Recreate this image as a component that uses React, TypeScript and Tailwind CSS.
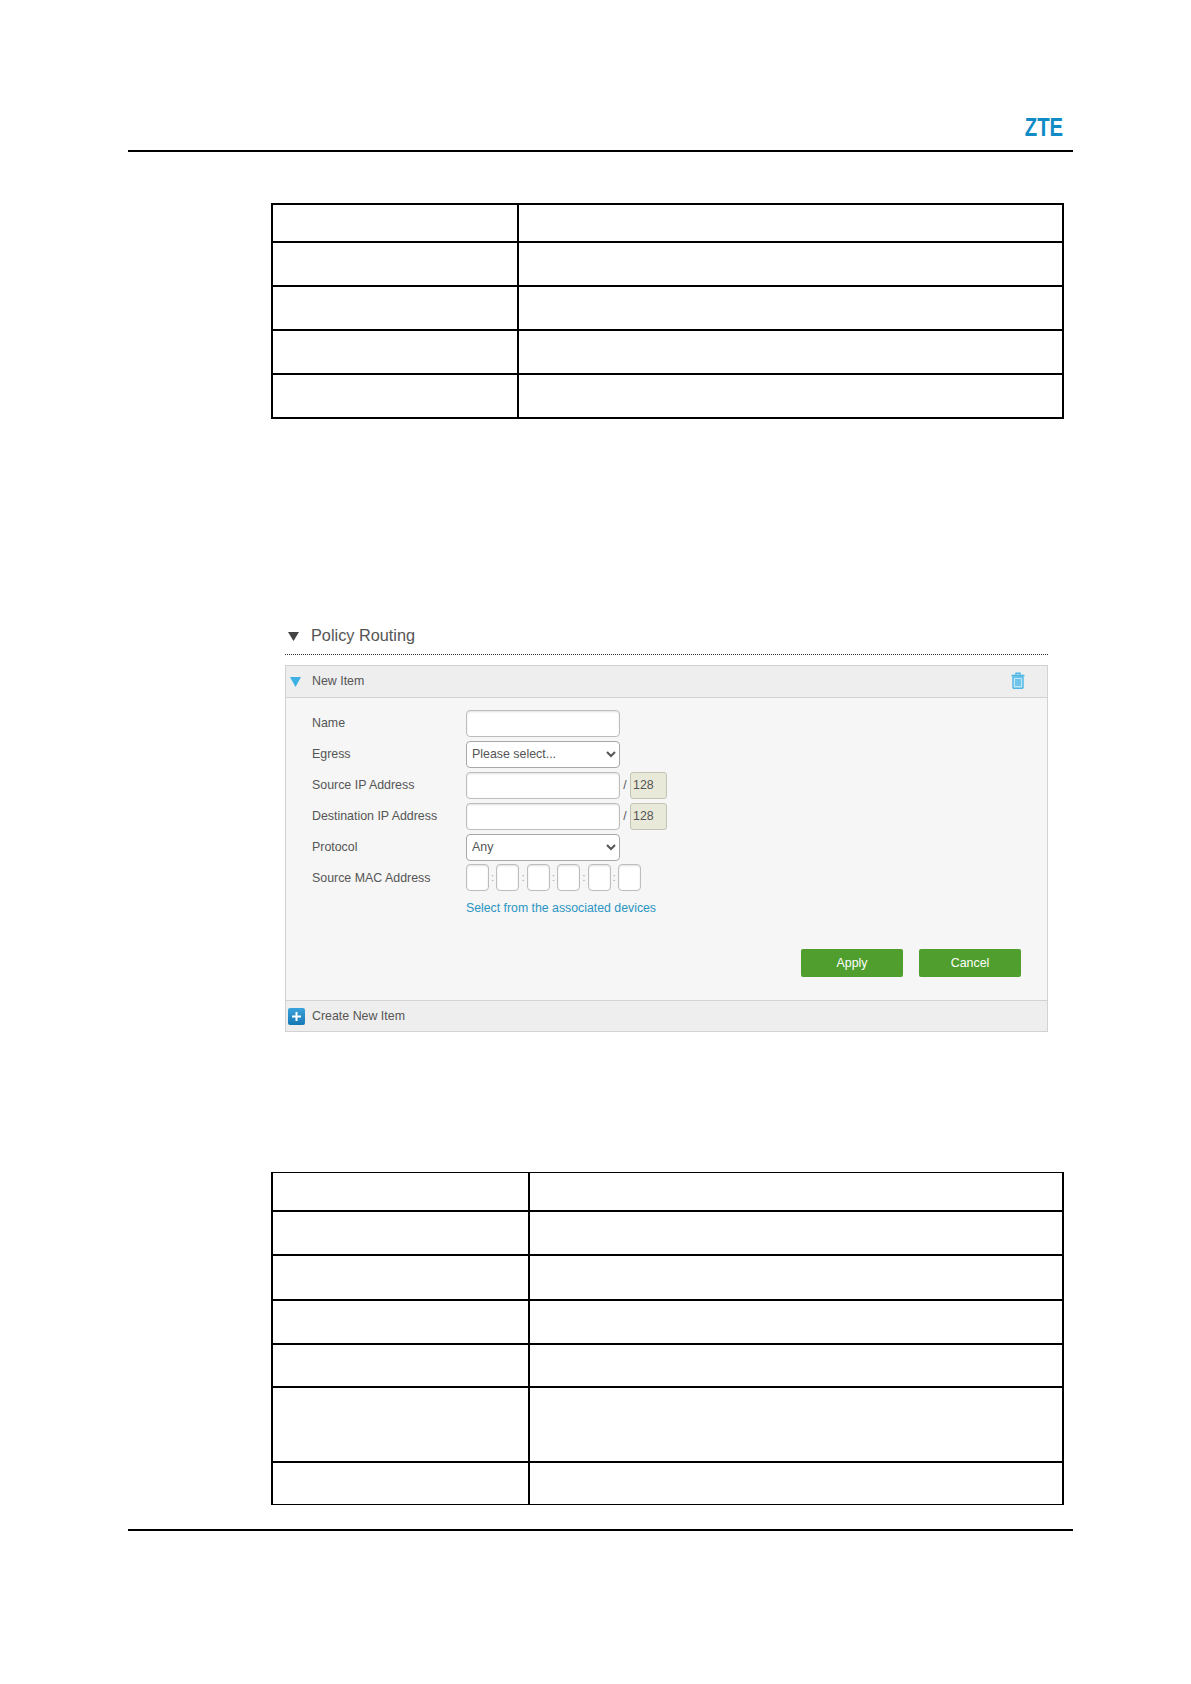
const FONT = "font-['Liberation_Sans',Arial,sans-serif]";

const TOP_ROWS = ['h-[38px]', 'h-[44px]', 'h-[44px]', 'h-[44px]', 'h-[44px]'];
const BOTTOM_ROWS = ['h-[38px]', 'h-[44px]', 'h-[45px]', 'h-[44px]', 'h-[43px]', 'h-[75px]', 'h-[43px]'];

function EmptyTable({ rows, firstCol, thinEdges }: { rows: string[]; firstCol: string; thinEdges?: boolean }) {
  return (
    <table className="w-[793px] table-fixed border-collapse">
      <colgroup>
        <col className={firstCol} />
        <col />
      </colgroup>
      <tbody>
        {rows.map((h, i) => {
          // the second table has hairline top and bottom edges in the scan
          let edge = 'border-2';
          if (thinEdges && i === 0) edge = 'border-x-2 border-b-2 border-t';
          if (thinEdges && i === rows.length - 1) edge = 'border-x-2 border-t-2 border-b';
          return (
            <tr key={i} className={h}>
              <td className={`${edge} border-black`}></td>
              <td className={`${edge} border-black`}></td>
            </tr>
          );
        })}
      </tbody>
    </table>
  );
}

function Rule() {
  return <div className="ml-[128px] h-[2px] w-[945px] bg-black"></div>;
}

function Label({ children }: { children: React.ReactNode }) {
  return <div className="w-[154px] text-[12.4px] text-[#555]">{children}</div>;
}

const inputCls = 'h-[27px] rounded-[4px] border border-[#bdbdbd] bg-white shadow-[inset_0_1px_2px_rgba(0,0,0,0.12)]';

function Prefix() {
  return (
    <div className="flex items-center">
      <div className={`${inputCls} w-[154px]`}></div>
      <span className="w-[10px] text-center text-[12px] text-[#555]">/</span>
      <div className="flex h-[27px] w-[37px] items-center rounded-[3px] border border-[#c4c4b4] bg-[#e9e9d9] pl-[2px] text-[12.4px] text-[#555]">
        128
      </div>
    </div>
  );
}

function Dropdown({ text }: { text: string }) {
  return (
    <select className={`h-[27px] w-[154px] rounded-[4px] border border-[#a8a8a8] bg-white pl-[1px] text-[12.4px] text-[#555] ${FONT}`}>
      <option>{text}</option>
    </select>
  );
}

function MacFields() {
  return (
    <div className="flex items-center">
      {[0, 1, 2, 3, 4, 5].map((i) => (
        <div key={i} className="flex items-center">
          {i > 0 && <span className="w-[7.4px] text-center text-[10px] text-[#999]">:</span>}
          <div className={`${inputCls} w-[23px]`}></div>
        </div>
      ))}
    </div>
  );
}

function Row({ label, children }: { label: string; children: React.ReactNode }) {
  return (
    <div className="flex h-[27px] items-center">
      <Label>{label}</Label>
      {children}
    </div>
  );
}

export default function App() {
  return (
    <div className={`h-[1684px] w-[1191px] bg-white ${FONT}`}>
      {/* page header */}
      <div className="flex h-[150px] items-end justify-end pr-[128px]">
        <span className="mb-[10px] origin-right scale-x-[0.78] text-[26px] leading-[26px] font-bold text-[#0f8cc6]">ZTE</span>
      </div>
      <Rule />

      <div className="ml-[271px] mt-[51px]">
        <EmptyTable rows={TOP_ROWS} firstCol="w-[246px]" />
      </div>

      {/* Policy Routing screenshot */}
      <div className="ml-[285px] mt-[200px] w-[763px]">
        <div className="flex h-[36px] items-center border-b border-dotted border-[#333] pb-[3px]">
          <svg width="11" height="9" viewBox="0 0 11 9" className="ml-[3px] mt-[3px]">
            <path d="M0 0h11L5.5 9z" fill="#444" />
          </svg>
          <span className="ml-[12px] text-[16.3px] text-[#555]">Policy Routing</span>
        </div>

        <div className="mt-[10px] border border-[#d2d2d2]">
          <div className="flex h-[32px] items-center border-b border-[#d2d2d2] bg-[#eeeeee]">
            <svg width="11" height="10" viewBox="0 0 11 10" className="ml-[4px]">
              <path d="M0 0h11L5.5 10z" fill="#3cb1e3" />
            </svg>
            <span className="ml-[11px] text-[12.4px] text-[#555]">New Item</span>
            <svg width="14" height="17" viewBox="0 0 14 17" className="ml-auto mb-[2px] mr-[22px]" fill="none" stroke="#4cb6e6" strokeWidth="1.4">
              <path d="M0.5 3.5h13M5 3V1.2h4V3" />
              <path d="M2 5h10v10.2a1 1 0 0 1-1 1H3a1 1 0 0 1-1-1z" fill="#bfe6f7" />
              <path d="M5 7v7M7 7v7M9 7v7" />
            </svg>
          </div>

          <div className="flex h-[302px] flex-col bg-[#f6f6f6] pl-[26px] pr-[26px] pt-[12px]">
            <div className="flex flex-col gap-[3.9px]">
              <Row label="Name">
                <div className={`${inputCls} w-[154px]`}></div>
              </Row>
              <Row label="Egress">
                <Dropdown text="Please select..." />
              </Row>
              <Row label="Source IP Address">
                <Prefix />
              </Row>
              <Row label="Destination IP Address">
                <Prefix />
              </Row>
              <Row label="Protocol">
                <Dropdown text="Any" />
              </Row>
              <Row label="Source MAC Address">
                <MacFields />
              </Row>
            </div>
            <div className="ml-[154px] mt-[9px] text-[12.3px] leading-[16px] text-[#2a95c4]">Select from the associated devices</div>
            <div className="mt-[33px] flex justify-end gap-[16px]">
              <button className="h-[28px] w-[102px] rounded-[2px] bg-[#4f9e2e] text-[12.4px] text-white">Apply</button>
              <button className="h-[28px] w-[102px] rounded-[2px] bg-[#4f9e2e] text-[12.4px] text-white">Cancel</button>
            </div>
          </div>

          <div className="flex h-[31px] items-center border-t border-[#d2d2d2] bg-[#eeeeee]">
            <div className="ml-[2px] flex h-[17px] w-[17px] items-center justify-center rounded-[2px] bg-linear-to-b from-[#3aa3dc] to-[#1378b4]">
              <svg width="9" height="9" viewBox="0 0 9 9">
                <path d="M3.5 0h2v3.5H9v2H5.5V9h-2V5.5H0v-2h3.5z" fill="#fff" />
              </svg>
            </div>
            <span className="ml-[7px] text-[12.4px] text-[#555]">Create New Item</span>
          </div>
        </div>
      </div>

      <div className="ml-[271px] mt-[140px]">
        <EmptyTable rows={BOTTOM_ROWS} firstCol="w-[257px]" thinEdges />
      </div>

      <div className="mt-[24px]">
        <Rule />
      </div>
    </div>
  );
}
